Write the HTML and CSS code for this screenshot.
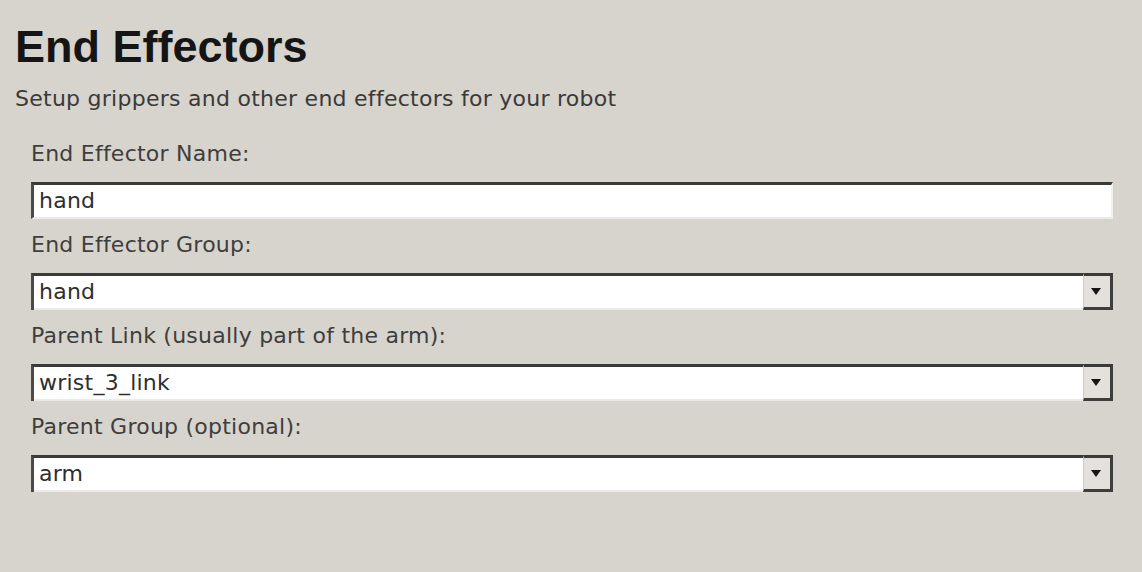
FILE: index.html
```html
<!DOCTYPE html>
<html>
<head>
<meta charset="utf-8">
<link rel="stylesheet" href="styles.css">
</head>
<body>
<div class="page">
  <h1 class="title">End Effectors</h1>
  <p class="subtitle">Setup grippers and other end effectors for your robot</p>
  <div class="form">
    <div class="row">
      <div class="label">End Effector Name:</div>
      <div class="field text"><span class="value">hand</span></div>
    </div>
    <div class="row">
      <div class="label">End Effector Group:</div>
      <div class="field combo"><span class="value">hand</span><span class="btn"><span class="arrow"></span></span></div>
    </div>
    <div class="row">
      <div class="label">Parent Link (usually part of the arm):</div>
      <div class="field combo"><span class="value">wrist_3_link</span><span class="btn"><span class="arrow"></span></span></div>
    </div>
    <div class="row">
      <div class="label">Parent Group (optional):</div>
      <div class="field combo"><span class="value">arm</span><span class="btn"><span class="arrow"></span></span></div>
    </div>
  </div>
</div>
</body>
</html>
```
FILE: styles.css
```css
html, body {
  margin: 0;
  padding: 0;
  background: #d7d3cd;
}
body {
  width: 1142px;
  height: 572px;
  overflow: hidden;
}
.page {
  display: flex;
  flex-direction: column;
  padding: 21px 29px 0 15px;
}
.title {
  margin: 0;
  font-family: "Liberation Sans", Arial, sans-serif;
  font-weight: bold;
  font-size: 45px;
  line-height: 52px;
  color: #151515;
}
.subtitle {
  margin: 13px 0 0 0;
  font-family: "DejaVu Sans", sans-serif;
  font-size: 22px;
  letter-spacing: 0.26px;
  line-height: 26px;
  color: #3a3a38;
}
.form {
  display: flex;
  flex-direction: column;
  padding: 29px 0 0 16px;
}
.row {
  display: flex;
  flex-direction: column;
  gap: 15px;
  margin-bottom: 13px;
}
.label {
  font-family: "DejaVu Sans", sans-serif;
  font-size: 22px;
  letter-spacing: 0.24px;
  line-height: 26px;
  color: #3e3e3c;
}
.field {
  height: 37px;
  box-sizing: border-box;
  background: #ffffff;
  border-top: 3px solid #3a3a38;
  border-left: 3px solid #4a4a48;
  border-right: 2px solid #f2f1ee;
  border-bottom: 2px solid #eceae6;
  display: flex;
  align-items: stretch;
  font-family: "DejaVu Sans", sans-serif;
  font-size: 22px;
  letter-spacing: 0.24px;
  color: #2e2e2e;
}
.value {
  flex: 1;
  padding: 3px 0 0 5px;
  line-height: 26px;
}
.combo {
  border-right: none;
  border-bottom: none;
}
.combo .value {
  border-bottom: 2px solid #ecebe7;
}
.btn {
  width: 30px;
  background: #e4e1dc;
  border-left: 1px solid #cfccc6;
  border-right: 3px solid #3e3e3c;
  border-bottom: 3px solid #3e3e3c;
  box-sizing: border-box;
  display: flex;
  align-items: center;
  justify-content: center;
  margin-top: -3px;
  border-top: 3px solid #3a3a38;
}
.arrow {
  width: 0;
  height: 0;
  border-left: 5px solid transparent;
  border-right: 5px solid transparent;
  border-top: 7px solid #151515;
  margin-left: -3px;
}
```
